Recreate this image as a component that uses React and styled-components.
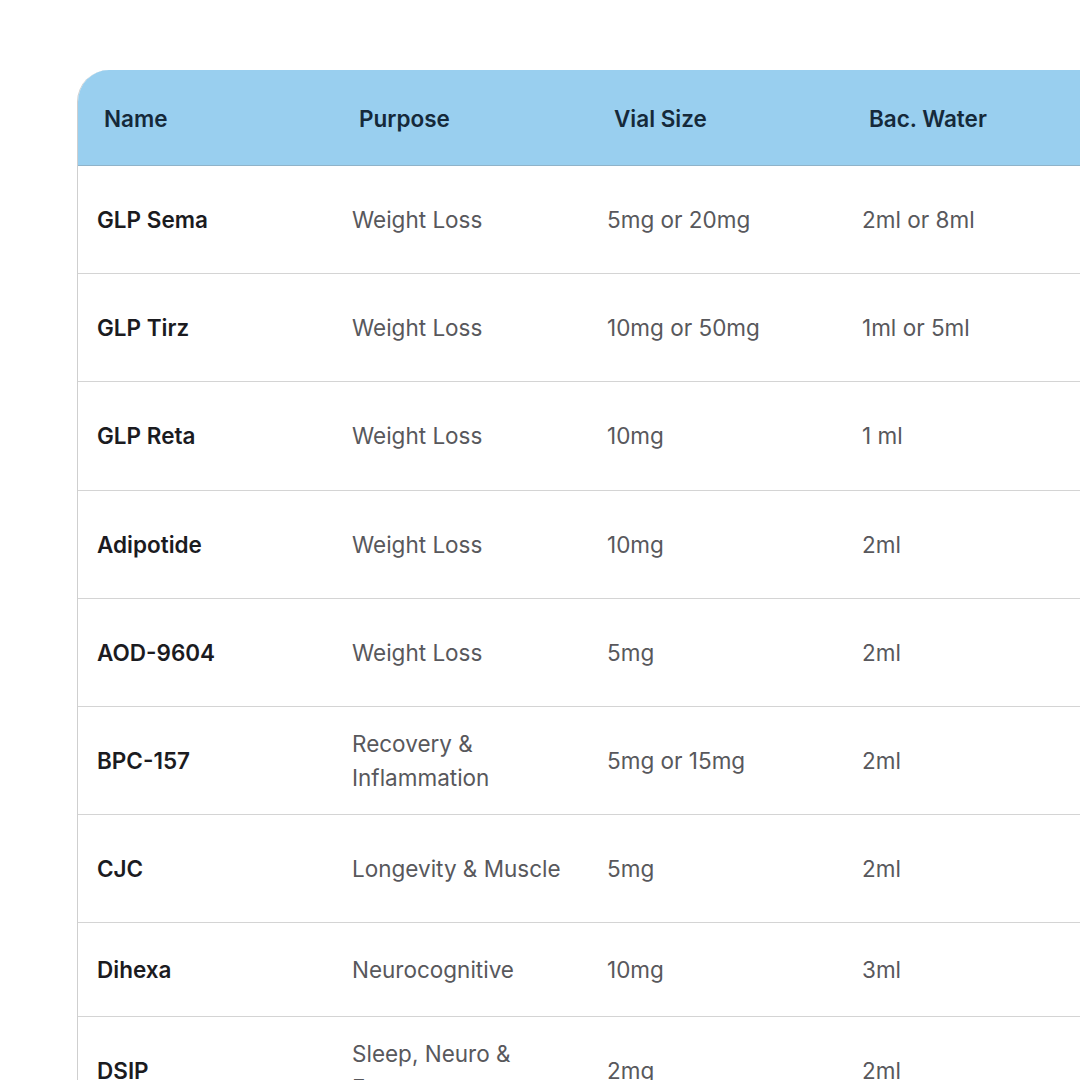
import React from "react";
import styled, { createGlobalStyle } from "styled-components";

const Global = createGlobalStyle`
  html, body { margin: 0; padding: 0; background: #ffffff; overflow: hidden; }
  body { font-family: Inter, "Liberation Sans", Arial, sans-serif; }
`;

const Page = styled.div`
  width: 1080px;
  height: 1080px;
  overflow: hidden;
  padding: 70px 0 0 77px;
  box-sizing: border-box;
`;

const Table = styled.div`
  width: 1100px;
  border-left: 1px solid #cfcfcf;
  border-top-left-radius: 32px;
  overflow: hidden;
`;

const HeadRow = styled.div`
  display: grid;
  grid-template-columns: repeat(4, 255px) 1fr;
  height: 95px;
  align-items: center;
  background: #99cfef;
  border-bottom: 1px solid #8fb3c9;
`;

const HeadCell = styled.div`
  padding-left: 26px;
  font-size: 22.5px;
  font-weight: 600;
  color: #15293a;
  padding-top: 2px;
`;

const Row = styled.div`
  display: grid;
  grid-template-columns: repeat(4, 255px) 1fr;
  height: ${(p) => p.$h}px;
  align-items: center;
  border-bottom: 1px solid #d4d4d4;
  box-sizing: border-box;
`;

const Cell = styled.div`
  padding-left: 19px;
  padding-right: 16px;
  font-size: 22.5px;
  line-height: 34px;
  font-weight: ${(p) => (p.$name ? 600 : 400)};
  color: ${(p) => (p.$name ? "#1b1b1f" : "#58585c")};
`;

const rows = [
  ["GLP Sema", "Weight Loss", "5mg or 20mg", "2ml or 8ml", 108],
  ["GLP Tirz", "Weight Loss", "10mg or 50mg", "1ml or 5ml", 108],
  ["GLP Reta", "Weight Loss", "10mg", "1 ml", 109],
  ["Adipotide", "Weight Loss", "10mg", "2ml", 108],
  ["AOD-9604", "Weight Loss", "5mg", "2ml", 108],
  ["BPC-157", "Recovery & Inflammation", "5mg or 15mg", "2ml", 108],
  ["CJC", "Longevity & Muscle", "5mg", "2ml", 108],
  ["Dihexa", "Neurocognitive", "10mg", "3ml", 94],
  ["DSIP", "Sleep, Neuro & Focus", "2mg", "2ml", 108],
];

export default function App() {
  return (
    <>
      <Global />
      <Page>
        <Table>
          <HeadRow>
            <HeadCell>Name</HeadCell>
            <HeadCell>Purpose</HeadCell>
            <HeadCell>Vial Size</HeadCell>
            <HeadCell>Bac. Water</HeadCell>
            <HeadCell />
          </HeadRow>
          {rows.map(([n, p, v, b, h]) => (
            <Row key={n} $h={h}>
              <Cell $name>{n}</Cell>
              <Cell>{p}</Cell>
              <Cell>{v}</Cell>
              <Cell>{b}</Cell>
              <Cell />
            </Row>
          ))}
        </Table>
      </Page>
    </>
  );
}
